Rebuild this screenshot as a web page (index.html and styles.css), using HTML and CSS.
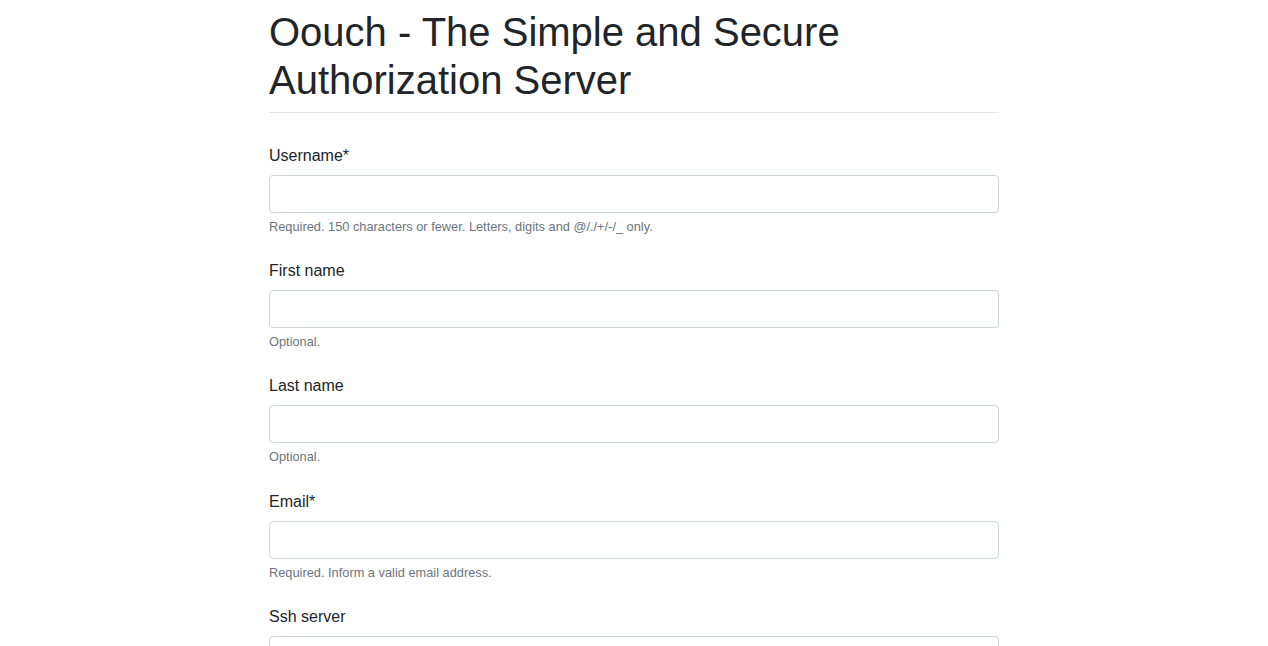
FILE: index.html
```html
<!DOCTYPE html>
<html lang="en">
<head>
<meta charset="utf-8">
<title>Oouch - Sign up</title>
<link rel="stylesheet" href="styles.css">
</head>
<body>
<main class="container">
  <header class="page-header">
    <h1 class="title">Oouch - The Simple and Secure Authorization Server</h1>
  </header>
  <form class="form">
    <div class="form-group">
      <label class="form-label" for="id_username">Username*</label>
      <input class="form-control" id="id_username" type="text">
      <small class="form-text">Required. 150 characters or fewer. Letters, digits and @/./+/-/_ only.</small>
    </div>
    <div class="form-group">
      <label class="form-label" for="id_first_name">First name</label>
      <input class="form-control" id="id_first_name" type="text">
      <small class="form-text">Optional.</small>
    </div>
    <div class="form-group">
      <label class="form-label" for="id_last_name">Last name</label>
      <input class="form-control" id="id_last_name" type="text">
      <small class="form-text">Optional.</small>
    </div>
    <div class="form-group">
      <label class="form-label" for="id_email">Email*</label>
      <input class="form-control" id="id_email" type="email">
      <small class="form-text">Required. Inform a valid email address.</small>
    </div>
    <div class="form-group">
      <label class="form-label" for="id_ssh_server">Ssh server</label>
      <input class="form-control" id="id_ssh_server" type="text">
    </div>
  </form>
</main>
</body>
</html>
```

FILE: styles.css
```css
html, body {
  margin: 0;
  height: 100%;
  overflow: hidden;
}

body {
  font-family: "Liberation Sans", Arial, sans-serif;
  font-size: 16px;
  line-height: 1.5;
  color: #212529;
  background: #fff;
}

.container {
  max-width: 730px;
  margin: 0 auto;
}

.page-header {
  padding: 8px 0;
  border-bottom: 1px solid #e5e5e5;
  margin-bottom: 24px;
}

.title {
  margin: 0;
  font-size: 40px;
  font-weight: 400;
  line-height: 48px;
}

.form-group {
  display: flex;
  flex-direction: column;
  margin-bottom: 16px;
}

.form-label {
  padding: 7px 0;
  line-height: 24px;
}

.form-control {
  box-sizing: border-box;
  height: 38px;
  padding: 6px 12px;
  font: inherit;
  color: #495057;
  border: 1px solid #ced4da;
  border-radius: 4px;
  background: #fff;
  margin: 0;
}

.form-text {
  margin-top: 4px;
  font-size: 12.8px;
  line-height: 19.2px;
  color: #6c757d;
}
```
